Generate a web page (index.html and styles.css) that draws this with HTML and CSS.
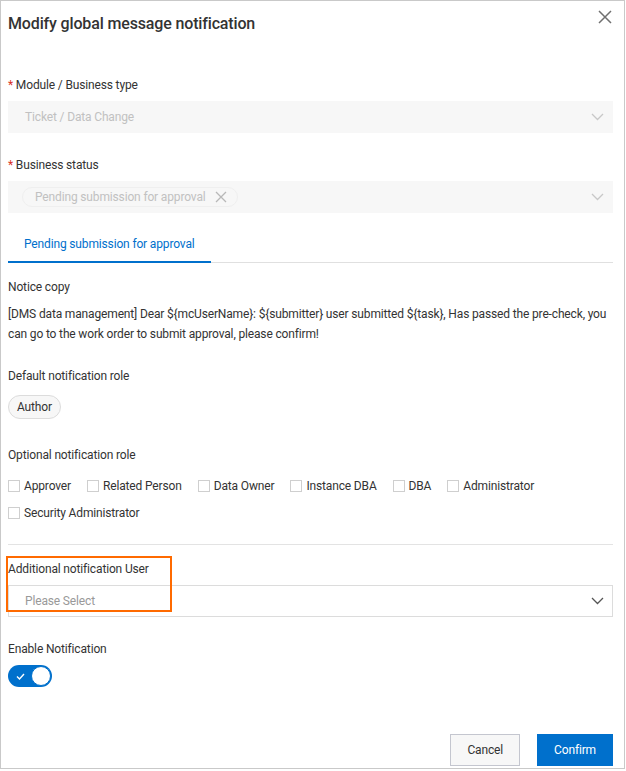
FILE: index.html
```html
<!DOCTYPE html>
<html lang="en">
<head>
<meta charset="utf-8">
<title>Modify global message notification</title>
<link rel="stylesheet" href="styles.css">
</head>
<body>
<div class="dialog">
  <header class="dlg-head">
    <h2 class="dlg-title">Modify global message notification</h2>
    <button class="dlg-close" aria-label="Close">
      <svg width="14" height="14" viewBox="0 0 14 14"><path d="M1 1 L13 13 M13 1 L1 13" stroke="#707070" stroke-width="1.5" fill="none"/></svg>
    </button>
  </header>

  <div class="dlg-body">
    <div class="label label-first"><span class="req">*</span> Module / Business type</div>
    <div class="select select-disabled">
      <span class="select-value">Ticket / Data Change</span>
      <svg class="chev" width="13" height="8" viewBox="0 0 13 8"><path d="M1 1 L6.5 6.5 L12 1" stroke="#c8c8c8" stroke-width="1.3" fill="none"/></svg>
    </div>

    <div class="label label-gap"><span class="req">*</span> Business status</div>
    <div class="select select-disabled select-tags">
      <span class="tag">Pending submission for approval
        <svg class="tag-x" width="12" height="12" viewBox="0 0 12 12"><path d="M1 1 L11 11 M11 1 L1 11" stroke="#b8b8b8" stroke-width="1.3" fill="none"/></svg>
      </span>
      <svg class="chev" width="13" height="8" viewBox="0 0 13 8"><path d="M1 1 L6.5 6.5 L12 1" stroke="#c8c8c8" stroke-width="1.3" fill="none"/></svg>
    </div>

    <div class="tabs">
      <div class="tab tab-active">Pending submission for approval</div>
    </div>

    <div class="label label-notice">Notice copy</div>
    <p class="notice-text">[DMS data management] Dear ${mcUserName}: ${submitter} user submitted ${task}, Has passed the pre-check, you can go to the work order to submit approval, please confirm!</p>

    <div class="label label-gap">Default notification role</div>
    <div class="role-tags"><span class="pill">Author</span></div>

    <div class="label label-optional">Optional notification role</div>
    <div class="checks">
      <label class="check"><span class="box"></span>Approver</label>
      <label class="check"><span class="box"></span>Related Person</label>
      <label class="check"><span class="box"></span>Data Owner</label>
      <label class="check"><span class="box"></span>Instance DBA</label>
      <label class="check"><span class="box"></span>DBA</label>
      <label class="check"><span class="box"></span>Administrator</label>
      <label class="check"><span class="box"></span>Security Administrator</label>
    </div>

    <div class="divider"></div>

    <div class="label label-additional">Additional notification User</div>
    <div class="select">
      <span class="select-placeholder">Please Select</span>
      <svg class="chev" width="13" height="8" viewBox="0 0 13 8"><path d="M1 1 L6.5 6.5 L12 1" stroke="#555" stroke-width="1.3" fill="none"/></svg>
    </div>

    <div class="label label-gap">Enable Notification</div>
    <div class="switch">
      <svg class="switch-check" width="9" height="7" viewBox="0 0 9 7"><path d="M1 3.5 L3.5 6 L8 1" stroke="#fff" stroke-width="1.4" fill="none"/></svg>
      <span class="knob"></span>
    </div>
  </div>

  <footer class="dlg-foot">
    <button class="btn btn-normal">Cancel</button>
    <button class="btn btn-primary">Confirm</button>
  </footer>

  <div class="highlight"></div>
</div>
</body>
</html>
```

FILE: styles.css
```css
* { box-sizing: border-box; }

html, body {
  margin: 0;
  padding: 0;
  background: #fff;
}

body {
  font-family: Roboto, "Liberation Sans", Arial, sans-serif;
  font-size: 12px;
  letter-spacing: -0.15px;
  color: #333;
}

.dialog {
  position: relative;
  width: 625px;
  height: 769px;
  border: 1px solid #c9c9c9;
  display: flex;
  flex-direction: column;
  padding: 0 11px 0 7px;
}

.dlg-head {
  display: flex;
  justify-content: space-between;
  align-items: flex-start;
  padding-top: 11px;
}

.dlg-title {
  margin: 0;
  font-size: 16px;
  line-height: 24px;
  font-weight: 500;
  letter-spacing: -0.15px;
  color: #333;
}

.dlg-close {
  border: 0;
  background: none;
  padding: 0;
  margin: -2px 1px 0 0;
  width: 14px;
  height: 14px;
  cursor: pointer;
}
.dlg-close svg { display: block; }

.dlg-body {
  display: flex;
  flex-direction: column;
  align-items: stretch;
}

.label {
  line-height: 16px;
  font-size: 12px;
  color: #333;
}
.label-first { margin-top: 41px; }
.label-gap { margin-top: 24px; }
.label-notice { margin-top: 16px; }
.label-optional { margin-top: 28px; }
.label-additional { margin-top: 16px; }

.req { color: #d93026; }

.select {
  margin-top: 8px;
  height: 32px;
  border: 1px solid #dcdcdc;
  background: #fff;
  display: flex;
  align-items: center;
  padding: 0 8px 0 16px;
}
.select-disabled {
  background: #f7f7f7;
  border-color: #f7f7f7;
}
.select-value { color: #c1c1c1; flex: 1; }
.select-placeholder { color: #999; flex: 1; }
.chev { margin-left: auto; display: block; }

.select-tags { padding-left: 13px; }

.tag {
  display: inline-flex;
  align-items: center;
  height: 20px;
  padding: 0 10px 0 12px;
  border: 1px solid #efefef;
  border-radius: 10px;
  color: #c1c1c1;
  gap: 9px;
}
.tag-x { display: block; }

.tabs {
  margin-top: 14px;
  display: flex;
  border-bottom: 1px solid #e0e0e0;
}
.tab {
  height: 36px;
  line-height: 35px;
  padding: 0 16px;
  color: #0070cc;
  margin-bottom: -1px;
}
.tab-active { border-bottom: 2px solid #0070cc; }

.notice-text {
  margin: 9px 0 0;
  line-height: 20px;
  color: #333;
}

.role-tags {
  margin-top: 11px;
  display: flex;
}
.pill {
  display: inline-flex;
  align-items: center;
  height: 24px;
  padding: 0 8px;
  border: 1px solid #dcdcdc;
  border-radius: 12px;
  background: #f7f7f7;
  color: #333;
}

.checks {
  margin-top: 15px;
  display: flex;
  flex-wrap: wrap;
  column-gap: 16px;
  row-gap: 11px;
}
.check {
  display: inline-flex;
  align-items: center;
  gap: 4px;
  line-height: 16px;
  color: #333;
}
.box {
  width: 12px;
  height: 12px;
  border: 1px solid #cfcfcf;
  background: #fff;
  display: inline-block;
}

.divider {
  margin-top: 23px;
  height: 1px;
  background: #e3e3e3;
}

.switch {
  margin-top: 8px;
  width: 44px;
  height: 22px;
  border-radius: 11px;
  background: #0070cc;
  display: flex;
  align-items: center;
  padding: 0 1px 0 8px;
}
.switch-check { display: block; }
.knob {
  margin-left: auto;
  width: 20px;
  height: 20px;
  border-radius: 50%;
  background: #fff;
  border: 1px solid #0070cc;
}

.dlg-foot {
  margin-top: auto;
  display: flex;
  justify-content: flex-end;
  gap: 17px;
  padding-bottom: 2px;
}
.btn {
  height: 32px;
  font-family: Roboto, "Liberation Sans", Arial, sans-serif;
  font-size: 12px;
  letter-spacing: -0.15px;
  padding: 0 16px;
  cursor: pointer;
}
.btn-normal {
  background: #f7f7f7;
  border: 1px solid #c4c6cf;
  color: #333;
}
.btn-primary {
  background: #0070cc;
  border: 1px solid #0070cc;
  color: #fff;
}

.highlight {
  position: absolute;
  left: 5px;
  top: 555px;
  width: 166px;
  height: 56px;
  border: 2px solid #ff6a00;
  pointer-events: none;
}
```
